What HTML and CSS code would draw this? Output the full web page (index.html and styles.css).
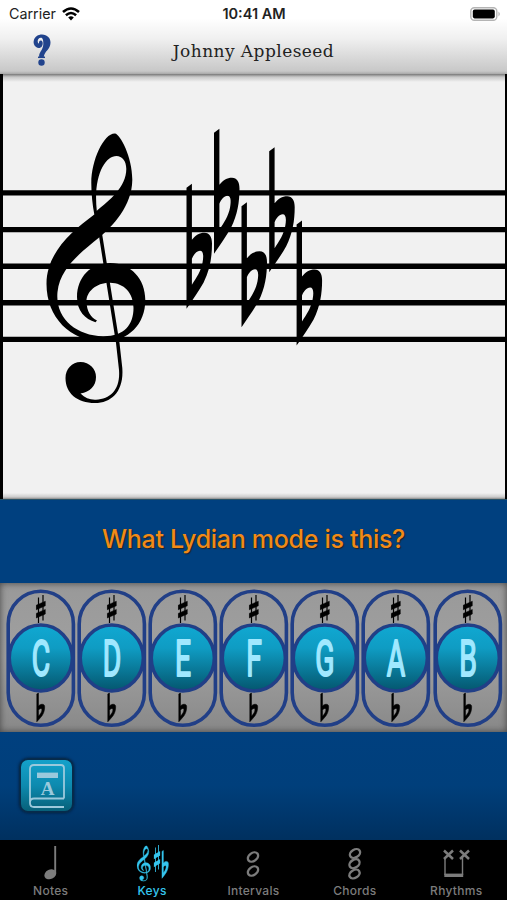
FILE: index.html
```html
<!DOCTYPE html>
<html lang="en">

<head>
    <meta charset="UTF-8">
    <meta name="viewport" content="width=device-width, initial-scale=1.0">
    <title>Keys</title>
    <link rel="stylesheet" href="styles.css">
</head>

<body>
    <svg class="defs" width="0" height="0">
        <defs>
            <symbol id="flat" viewBox="0 0 26 126" overflow="visible" preserveAspectRatio="none">
                <path fill-rule="evenodd" d="M0 4L5.400 0V56C9 51.500 13 49 18 49C23 49 25.500 53 25.500 60C25.500 73 23.500 86 17 99C12 108 6 116 0 125ZM5.400 75V101C10 94 14.500 87 16 79C17.500 71 16.500 67 13.500 67C10 67 7 71 5.400 75Z"/>
            </symbol>
            <symbol id="sharp" viewBox="0 0 10 28" preserveAspectRatio="none">
                <path d="M2.700 2.500V28M7.200 0V25.500" stroke="currentColor" stroke-width="1.200"/>
                <path d="M.4 10.200L9.600 6.200V10.800L.4 14.800ZM.4 18.400L9.600 14.400V19L.4 23Z"/>
            </symbol>
            <symbol id="clef" viewBox="45 132 102 273" preserveAspectRatio="none">
                <path fill-rule="evenodd" d="M115 133.500C120 134 132.500 157 132.300 180C132 206 113 226 98.500 238C83 251 60 267 57.500 292C55 318 76 335.500 103 336.200C124 336.500 133.500 325 133.500 308C133.500 293 124 282.800 110 282.700C96 282.500 86.500 292 86.500 301C86.500 311 91 318 97 320.500L95.500 322.200C85 319 77 311 77 297C77 277 91 263 110 263C131 263 145.300 279 145.300 300C145.300 324 129 341.500 103 341.500C70 341.500 46.500 317 46.500 284C46.500 253 71 232 94.300 214.500C92.500 205 91.300 194 91.300 183C91.300 160 104 133 115 133.500ZM96.800 210.700C109 201 126.300 187 126.300 169C126.300 161 122 156 116.500 156C105 156 93 176 96.800 210.700Z"/>
                <path d="M98.500 233L101.800 232L119.500 343L122.300 368C124 391 112 403 95 403C77 403 65.500 393 65.500 378C65.500 369 72 362 80.500 362C89.500 362 96 369 96 377C96 386 90 392 80.500 393.500C85 398 90 400 96 399.700C111 399 120.500 389 119 370L116 343Z"/>
            </symbol>
            <linearGradient id="ball" x1="0" y1="0" x2="0" y2="1">
                <stop offset="0" stop-color="#10a8d2"/>
                <stop offset=".35" stop-color="#0f9cc3"/>
                <stop offset="1" stop-color="#04566e"/>
            </linearGradient>
        </defs>
    </svg>

    <header class="header">
        <div class="status">
            <div class="carrier">
                <span>Carrier</span>
                <svg width="18" height="14" viewBox="0 0 18 14" fill="none" stroke="#000" stroke-width="2.600">
                    <path d="M1 5Q9 -2 17 5"/>
                    <path d="M3.900 8.200Q9 3.800 14.100 8.200"/>
                    <path d="M6.200 10.400Q9 8 11.800 10.400L9 13.400Z" fill="#000" stroke="none"/>
                </svg>
            </div>
            <div class="time">10:41 AM</div>
            <svg class="battery" width="31" height="14" viewBox="0 0 31 14">
                <rect x=".8" y=".8" width="26" height="12.400" rx="3.500" fill="#fff" stroke="#b4b4b4" stroke-width="1.400"/>
                <rect x="2.800" y="2.600" width="22" height="8.800" rx="1.800"/>
                <path d="M28.500 4.500Q31 7 28.500 9.500Z" fill="#aaa"/>
            </svg>
        </div>
        <div class="nav">
            <svg class="help" width="18" height="33" viewBox="0 0 18 33">
                <path fill="#21438c" d="M6.300 23.300C5.300 18.500 10 16.500 10.300 10.500C10.400 6.500 9.800 3.800 7.900 3.800C5.700 3.800 4.600 5.600 4.700 7.500C4.800 8.800 5.300 9.600 6 9.500C5.800 7.600 6.700 6.400 8 6.600C10 7 10.200 10.200 9 12.200C7.800 14.200 5 14.500 3.100 13.100C1 11.500 0 8.800.9 6C2 2.500 5 .4 9 .4C14.200 .4 17.600 4 17.500 8.700C17.400 15.700 11.500 16.500 10.700 23.300Z"/>
                <path d="M5 23.300H12" stroke="#21438c" stroke-width="1.500"/>
                <circle cx="8.500" cy="28.500" r="3.200" fill="#21438c"/>
            </svg>
            <h1 class="title">Johnny Appleseed</h1>
        </div>
    </header>

    <main class="staff">
        <svg width="507" height="425" viewBox="0 74 507 425">
            <path d="M0 192.900H507M0 229.600H507M0 266.200H507M0 302.800H507M0 339.400H507" stroke="#000" stroke-width="5.400"/>
            <use href="#clef" x="45" y="132" width="102" height="273"/>
            <use href="#flat" x="186.500" y="183.800" width="26" height="126"/>
            <use href="#flat" x="214" y="128.800" width="26" height="126"/>
            <use href="#flat" x="241.500" y="202.200" width="26" height="126"/>
            <use href="#flat" x="269.200" y="147.300" width="26" height="126"/>
            <use href="#flat" x="296.600" y="220.600" width="26" height="126"/>
        </svg>
    </main>

    <section class="question">What Lydian mode is this?</section>

    <section class="keys" id="keys"></section>

    <section class="tools">
        <button class="book" aria-label="Reference">
            <svg width="36" height="44" viewBox="0 0 36 44" fill="none" stroke="#9bc9dc" stroke-width="1.800">
                <path d="M35 34.500V4Q35 1 32 1H5Q1 1 1 5V39Q1 43 5 43H35M1 38.500Q1 34.500 5 34.500H35"/>
                <path d="M8 11.300H29" stroke-width="5.400"/>
                <text class="book-letter" x="18.500" y="30.500">A</text>
            </svg>
        </button>
    </section>

    <nav class="tabs">
        <a class="tab">
            <svg width="40" height="38" viewBox="0 0 40 38">
                <path d="M24.200 1V28" stroke="currentColor" stroke-width="1.900"/>
                <ellipse cx="19.300" cy="29.300" rx="6.200" ry="4.700" transform="rotate(-25 19.300 29.300)"/>
            </svg>
            <span>Notes</span>
        </a>
        <a class="tab active">
            <svg width="40" height="38" viewBox="0 0 40 38">
                <use href="#clef" x="4.800" y=".5" width="14" height="36" stroke="currentColor" stroke-width="3"/>
                <use href="#sharp" x="21.500" y="0" width="7" height="27"/>
                <use href="#flat" x="30" y="5.500" width="6.500" height="28" stroke="currentColor" stroke-width="2"/>
            </svg>
            <span>Keys</span>
        </a>
        <a class="tab">
            <svg width="40" height="38" viewBox="0 0 40 38" fill="none" stroke="currentColor" stroke-width="2.400">
                <ellipse cx="20" cy="12" rx="5.600" ry="4" transform="rotate(-38 20 12)"/>
                <ellipse cx="20" cy="26" rx="5.600" ry="4" transform="rotate(-38 20 26)"/>
            </svg>
            <span>Intervals</span>
        </a>
        <a class="tab">
            <svg width="40" height="38" viewBox="0 0 40 38" fill="none" stroke="currentColor" stroke-width="2.400">
                <ellipse cx="20" cy="8.500" rx="5.500" ry="3.900" transform="rotate(-32 20 8.500)"/>
                <ellipse cx="19.500" cy="18.700" rx="5.500" ry="3.900" transform="rotate(-32 19.500 18.700)"/>
                <ellipse cx="19.500" cy="29" rx="5.500" ry="3.900" transform="rotate(-32 19.500 29)"/>
            </svg>
            <span>Chords</span>
        </a>
        <a class="tab">
            <svg width="40" height="38" viewBox="0 0 40 38" fill="none" stroke="currentColor">
                <path d="M8 5.500L17 14M17 5.500L8 14M24 5.500L33 14M33 5.500L24 14" stroke-width="2.500"/>
                <path d="M9 13V30M26.500 13V30" stroke-width="1.400"/>
                <path d="M8.300 30.300H27.200" stroke-width="3.400"/>
            </svg>
            <span>Rhythms</span>
        </a>
    </nav>

    <script>
        document.getElementById('keys').innerHTML = ['C', 'D', 'E', 'F', 'G', 'A', 'B'].map(function (note) {
            return '<svg class="key" width="70" height="139" viewBox="0 0 70 139">' +
                '<rect x="2.200" y="2.300" width="65.200" height="134" rx="32.600" fill="none" stroke="#213f87" stroke-width="3.600"/>' +
                '<use href="#sharp" x="29.800" y="6" width="10" height="28" stroke="#000" stroke-width=".5"/>' +
                '<use href="#flat" x="30.800" y="104" width="8" height="29" stroke="#000" stroke-width="2"/>' +
                '<ellipse cx="34.800" cy="69" rx="31.600" ry="33" fill="url(#ball)" stroke="#213f87" stroke-width="3.600"/>' +
                '<text class="note" transform="translate(35 87.200) scale(.56 1)">' + note + '</text>' +
                '</svg>';
        }).join('');
    </script>
</body>

</html>
```

FILE: styles.css
```css
* {
    box-sizing: border-box;
}

body {
    margin: 0;
    width: 507px;
    height: 900px;
    overflow: hidden;
    display: flex;
    flex-direction: column;
    background: #000;
    font-family: Inter, "Liberation Sans", sans-serif;
}

.defs {
    position: absolute;
}

.header {
    height: 74px;
    flex: none;
    background: linear-gradient(#fff 25%, #f0f0f0 52%, #c8c8c8 96%, #a8a8a8);
}

.status {
    height: 27px;
    padding: 0 6px 0 9px;
    display: grid;
    grid-template-columns: 1fr auto 1fr;
    align-items: center;
    font-size: 14.300px;
    color: #222;
}

.carrier {
    display: flex;
    align-items: center;
    gap: 6px;
}

.time {
    margin-right: 2px;
    font-weight: 600;
    font-size: 14.500px;
}

.battery {
    justify-self: end;
}

.nav {
    height: 47px;
    display: grid;
    grid-template-columns: 1fr auto 1fr;
    align-items: center;
}

.help {
    margin-left: 33px;
}

.title {
    margin: 0;
    font: 400 17px "DejaVu Serif", serif;
    letter-spacing: .45px;
    color: #222;
}

.staff {
    height: 425px;
    flex: none;
    background: linear-gradient(#777, #c8c8c8 3px, #f1f1f1 8px, #f1f1f1 419px, #ccc 423px, #888);
    border-left: 3px solid #000;
    border-right: 2px solid #000;
}

.staff svg {
    display: block;
    margin-left: -3px;
}

.question {
    height: 84px;
    flex: none;
    padding-bottom: 6px;
    display: flex;
    align-items: center;
    justify-content: center;
    background: #00407f;
    border-top: 1px solid #285267;
    color: #f08a18;
    font-size: 25px;
    font-weight: 500;
    letter-spacing: -.3px;
    text-shadow: 1px 1px 1px #222;
}

.keys {
    height: 149px;
    flex: none;
    padding: 6px 0 0 5.500px;
    display: flex;
    gap: 1.200px;
    background: linear-gradient(#999, #a0a0a0 50%, #888);
    box-shadow: inset 0 0 7px #444;
}

.key {
    flex: none;
}

.note {
    font: 400 50.500px Roboto, sans-serif;
    text-anchor: middle;
    fill: #a0e8ff;
    stroke: #a0e8ff;
    stroke-width: 2px;
    stroke-linejoin: round;
}

.tools {
    height: 108px;
    flex: none;
    padding: 26px 19px;
    background: linear-gradient(#00407f, #003f7b 50%, #00305f);
}

.book {
    width: 55px;
    height: 55px;
    padding: 0;
    display: flex;
    align-items: center;
    justify-content: center;
    border: 2px solid #062b4c;
    border-radius: 9px;
    background: linear-gradient(#14a1ca, #0d8aaf 50%, #076079);
    box-shadow: 0 0 3px #001c3a;
}

.book-letter {
    font: 700 19px "Liberation Serif", serif;
    text-anchor: middle;
    fill: #9bc9dc;
    stroke: none;
}

.tabs {
    height: 60px;
    flex: none;
    display: grid;
    grid-template-columns: repeat(5, 1fr);
}

.tab {
    padding-top: 5px;
    display: flex;
    flex-direction: column;
    align-items: center;
    color: #7c7c7c;
    fill: currentColor;
    font-size: 12px;
    font-weight: 500;
    line-height: 16px;
    letter-spacing: .3px;
}

.tab.active {
    color: #35c5ee;
}
```
